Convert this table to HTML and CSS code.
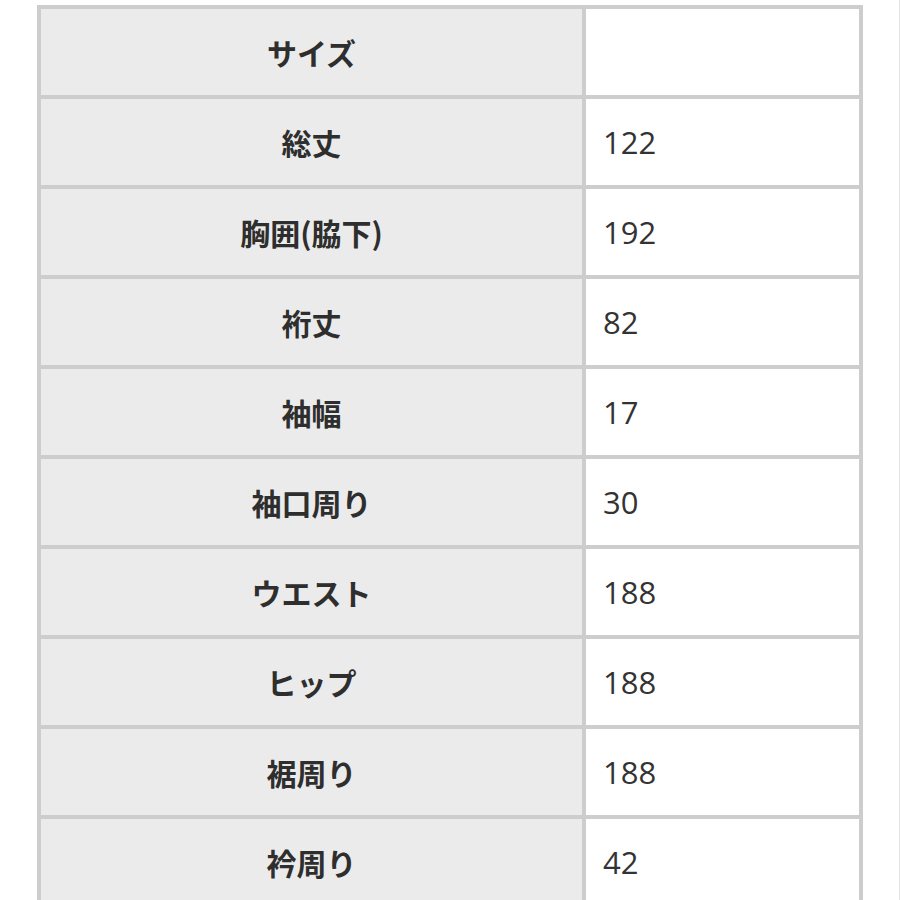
FILE: index.html
```html
<!DOCTYPE html>
<html lang="ja">
<head>
<meta charset="utf-8">
<link rel="stylesheet" href="styles.css">
</head>
<body>
<div class="page">
  <div class="spec">
    <div class="label">サイズ</div><div class="value"></div>
    <div class="label">総丈</div><div class="value">122</div>
    <div class="label">胸囲(脇下)</div><div class="value">192</div>
    <div class="label">裄丈</div><div class="value">82</div>
    <div class="label">袖幅</div><div class="value">17</div>
    <div class="label">袖口周り</div><div class="value">30</div>
    <div class="label">ウエスト</div><div class="value">188</div>
    <div class="label">ヒップ</div><div class="value">188</div>
    <div class="label">裾周り</div><div class="value">188</div>
    <div class="label">衿周り</div><div class="value">42</div>
  </div>
</div>
</body>
</html>
```
FILE: styles.css
```css
html, body {
  margin: 0;
  padding: 0;
  background: #ffffff;
}
.page {
  width: 900px;
  height: 900px;
  overflow: hidden;
  box-sizing: border-box;
  padding: 5px 0 0 37px;
  border-right: 1px solid #e4e4e4;
}
.spec {
  display: grid;
  grid-template-columns: 541px 273px;
  grid-auto-rows: 86px;
  gap: 4px;
  padding: 4px;
  width: max-content;
  background: #cdcdcd;
}
.label {
  background: #ebebeb;
  display: flex;
  align-items: center;
  justify-content: center;
  font-family: "Noto Sans CJK JP", "Noto Sans", sans-serif;
  font-weight: 700;
  font-size: 30px;
  color: #2e2e2e;
}
.value {
  background: #ffffff;
  display: flex;
  align-items: center;
  padding-left: 17px;
  font-family: "Open Sans", "Noto Sans", sans-serif;
  font-size: 31px;
  color: #333333;
}
```
